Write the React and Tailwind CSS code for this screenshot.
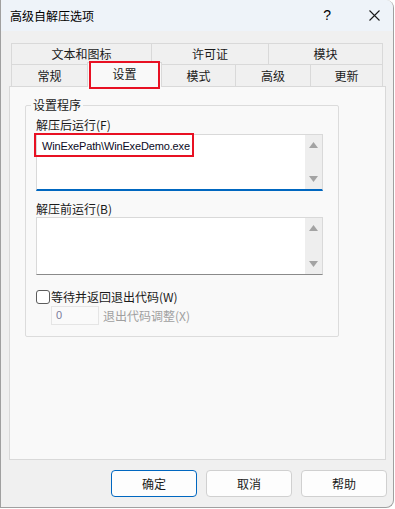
import React from 'react';

const tabsTop = [
  { label: "文本和图标", w: "w-[140px]" },
  { label: "许可证", w: "w-[117px]" },
  { label: "模块", w: "w-[115px]" },
];

const ScrollArrows = () => (
  <div className="w-[17px] h-full bg-[#eeeeee] flex flex-col items-center justify-between py-[7px]">
    <svg width="9" height="6" viewBox="0 0 9 6"><path d="M4.5 0 L9 6 L0 6 Z" fill="#a3a3a3" /></svg>
    <svg width="9" height="6" viewBox="0 0 9 6"><path d="M0 0 L9 0 L4.5 6 Z" fill="#a3a3a3" /></svg>
  </div>
);

export default function App() {
  return (
    <div className="w-[395px] h-[509px] bg-white font-['Microsoft_YaHei_UI','Noto_Sans_CJK_SC',sans-serif] text-[12px] text-[#1a1a1a]">
      <div className="w-[394px] h-[508px] bg-[#f0f0f0] border-l border-r border-b border-[#a0a0a0] rounded-tr-[8px] rounded-br-[8px] overflow-hidden flex flex-col">
        {/* Title bar */}
        <div className="h-[31px] bg-[#eef3f9] flex items-center shrink-0">
          <span className="pl-[9px] text-[12px] leading-[16px] text-black">高级自解压选项</span>
          <span className="ml-auto text-[14px] text-black mr-[38px] font-['Liberation_Sans',sans-serif]">?</span>
          <svg width="11" height="11" viewBox="0 0 11 11" className="mr-[13px]">
            <path d="M0.5 0.5 L10.5 10.5 M10.5 0.5 L0.5 10.5" stroke="#1a1a1a" strokeWidth="1.1" />
          </svg>
        </div>

        {/* Tabs */}
        <div className="pt-[12px]">
          <div className="ml-[10px] flex h-[21px]">
            {tabsTop.map((t, i) => (
              <div key={t.label} className={`${t.w} h-full border-t border-l ${i === 2 ? "border-r" : ""} border-[#d9d9d9] flex items-center justify-center leading-[14px]`}>
                {t.label}
              </div>
            ))}
          </div>
          <div className="ml-[10px] flex h-[22px] items-end relative z-10">
            <div className="w-[76px] h-[22px] border-t border-l border-[#d9d9d9] flex items-center justify-center leading-[14px]">常规</div>
            <div className="relative w-[75px] h-[25px] -mb-px border-t border-l border-r border-[#d9d9d9] bg-[#f9f9f9] flex items-center justify-center leading-[14px] pb-[2px]">
              设置
              <div className="absolute left-[1px] top-[-2px] w-[71px] h-[28px] border-2 border-[#e81123]" />
            </div>
            <div className="w-[73px] h-[22px] border-t border-[#d9d9d9] flex items-center justify-center leading-[14px]">模式</div>
            <div className="w-[75px] h-[22px] border-t border-l border-[#d9d9d9] flex items-center justify-center leading-[14px]">高级</div>
            <div className="w-[73px] h-[22px] border-t border-l border-r border-[#d9d9d9] flex items-center justify-center leading-[14px]">更新</div>
          </div>

          {/* Panel */}
          <div className="ml-[8px] w-[377px] h-[374px] border border-[#d9d9d9] bg-[#f9f9f9] pt-[10px]">
            <fieldset className="ml-[15px] w-[314px] h-[240px] border border-[#dcdcdc] rounded-[2px] pl-[10px]">
              <legend className="ml-[-5px] px-[2px] leading-[16px]">设置程序</legend>

              <div className="mt-[5px] leading-[14px]">解压后运行(F)</div>
              <div className="relative mt-[2px] w-[287px] h-[57px] bg-white border border-[#d9d9d9] border-b-2 border-b-[#0067c0] flex">
                <div className="flex-1 pl-[5px] pt-[4px] leading-[15px] text-[#0a0a1e] font-['Liberation_Sans',sans-serif] text-[11px] tracking-[-0.15px]">WinExePath\WinExeDemo.exe</div>
                <ScrollArrows />
                <div className="absolute left-[-3px] top-[-2px] w-[160px] h-[24px] border-2 border-[#e81123]" />
              </div>

              <div className="mt-[11px] leading-[14px]">解压前运行(B)</div>
              <div className="mt-[1px] w-[287px] h-[58px] bg-white border border-[#d9d9d9] border-b-[#8a8a8a] flex">
                <div className="flex-1" />
                <ScrollArrows />
              </div>

              <div className="mt-[15px] flex items-center h-[14px]">
                <div className="w-[14px] h-[14px] border border-[#5c5c5c] rounded-[3px] bg-white" />
                <span className="ml-[1px] leading-[14px]">等待并返回退出代码(W)</span>
              </div>
              <div className="mt-[2px] ml-[15px] flex items-center">
                <div className="w-[48px] h-[19px] border border-[#e5e5e5] bg-[#fafafa] pl-[4px] text-[11px] leading-[17px] text-[#7a7a9a] font-['Liberation_Sans',sans-serif]">0</div>
                <span className="ml-[4px] text-[#a0a0a0] leading-[14px]">退出代码调整(X)</span>
              </div>
            </fieldset>
          </div>
        </div>

        {/* Buttons */}
        <div className="mt-[10px] flex justify-end gap-[9px] pr-[6px]">
          <button className="w-[86px] h-[27px] rounded-[4px] border border-[#0067c0] bg-[#fdfdfd] leading-[14px]">确定</button>
          <button className="w-[86px] h-[27px] rounded-[4px] border border-[#d0d0d0] bg-[#fdfdfd] leading-[14px]">取消</button>
          <button className="w-[86px] h-[27px] rounded-[4px] border border-[#d0d0d0] bg-[#fdfdfd] leading-[14px]">帮助</button>
        </div>
      </div>
    </div>
  );
}
